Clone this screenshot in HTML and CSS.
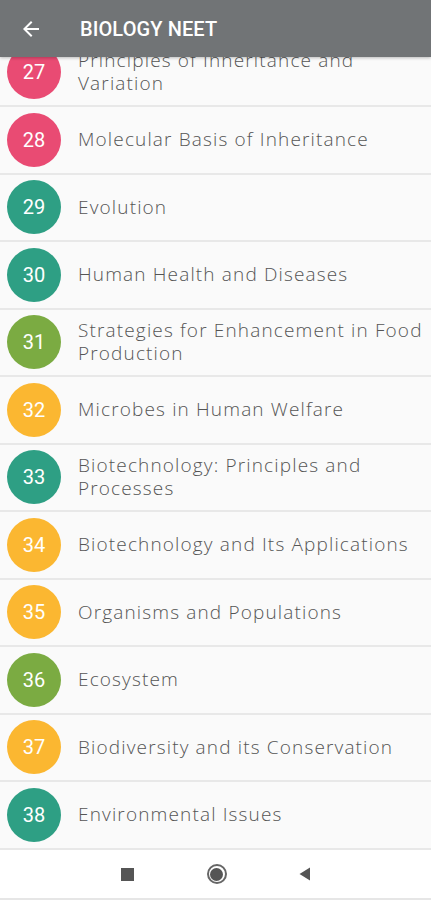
FILE: index.html
```html
<!DOCTYPE html>
<html>
<head>
<meta charset="utf-8">
<link rel="stylesheet" href="styles.css">
</head>
<body>
<div class="screen">
  <header class="appbar">
    <svg class="back" width="24" height="24" viewBox="0 0 24 24"><path d="M20 11H7.83l5.59-5.59L12 4l-8 8 8 8 1.41-1.41L7.83 13H20v-2z" fill="#fff"/></svg>
    <span class="title">BIOLOGY NEET</span>
  </header>
  <main class="listwrap">
    <ul class="list">
      <li class="row"><span class="num pink">27</span><span class="name">Principles of Inheritance and Variation</span></li>
      <li class="row"><span class="num pink">28</span><span class="name">Molecular Basis of Inheritance</span></li>
      <li class="row"><span class="num teal">29</span><span class="name">Evolution</span></li>
      <li class="row"><span class="num teal">30</span><span class="name">Human Health and Diseases</span></li>
      <li class="row"><span class="num green">31</span><span class="name">Strategies for Enhancement in Food Production</span></li>
      <li class="row"><span class="num amber">32</span><span class="name">Microbes in Human Welfare</span></li>
      <li class="row"><span class="num teal">33</span><span class="name">Biotechnology: Principles and Processes</span></li>
      <li class="row"><span class="num amber">34</span><span class="name">Biotechnology and Its Applications</span></li>
      <li class="row"><span class="num amber">35</span><span class="name">Organisms and Populations</span></li>
      <li class="row"><span class="num green">36</span><span class="name">Ecosystem</span></li>
      <li class="row"><span class="num amber">37</span><span class="name">Biodiversity and its Conservation</span></li>
      <li class="row"><span class="num teal">38</span><span class="name">Environmental Issues</span></li>
    </ul>
  </main>
  <nav class="sysnav">
    <span class="sq"></span>
    <span class="home"><span class="dot"></span></span>
    <svg class="tri" width="12" height="14" viewBox="0 0 12 14"><path d="M11 0.5V13.5L0.5 7z" fill="#555"/></svg>
  </nav>
</div>
</body>
</html>
```
FILE: styles.css
```css
* { box-sizing: border-box; }
html, body { margin: 0; padding: 0; }
body { background: #fafafa; font-family: "Open Sans", "Liberation Sans", sans-serif; }
.screen { width: 431px; height: 900px; display: flex; flex-direction: column; overflow: hidden; }
.appbar {
  height: 57px; flex: none; background: #717476; display: flex; align-items: center;
  position: relative; z-index: 2; box-shadow: 0 1px 3px rgba(0,0,0,0.25);
}
.back { margin-left: 19px; width: 24px; height: 24px; }
.title {
  margin-left: 37px; color: #fff; font-family: Roboto, "Liberation Sans", sans-serif;
  font-weight: 500; font-size: 20px; letter-spacing: 0.1px;
}
.listwrap { flex: 1; overflow: hidden; background: #fafafa; }
.list { list-style: none; margin: -17.5px 0 0 0; padding: 0; }
.row {
  height: 67.5px; display: flex; align-items: center; border-bottom: 2px solid #e8e8e8;
  padding-left: 7px;
}
.num {
  flex: none; width: 54px; height: 54px; border-radius: 50%; display: flex;
  align-items: center; justify-content: center; color: #fff;
  font-family: Roboto, "Liberation Sans", sans-serif; font-size: 20px;
}
.pink { background: #e94b73; }
.teal { background: #2e9f84; }
.green { background: #7bab42; }
.amber { background: #fbb731; }
.name {
  margin-left: 17px; color: #555; font-size: 19px; font-weight: 300; line-height: 23px;
  letter-spacing: 1.15px; padding-right: 8px;
}
.sysnav {
  height: 50px; flex: none; background: #fff; display: flex; align-items: center;
  justify-content: center; border-bottom: 2px solid #e6e6e6;
}
.sq { width: 13px; height: 13px; background: #555; margin-right: 73px; }
.home {
  width: 20px; height: 20px; border-radius: 50%; border: 2px solid #666;
  display: flex; align-items: center; justify-content: center; margin-right: 72px;
}
.dot { width: 13px; height: 13px; border-radius: 50%; background: #555; }
.tri { width: 12px; height: 14px; }
```
